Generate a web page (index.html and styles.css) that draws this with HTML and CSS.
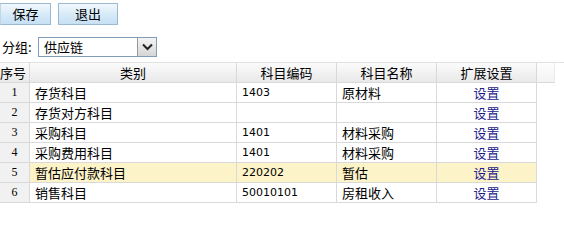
FILE: index.html
```html
<!DOCTYPE html>
<html lang="zh">
<head>
<meta charset="utf-8">
<title>科目设置</title>
<link rel="stylesheet" href="styles.css">
</head>
<body>
<div class="toolbar">
  <button class="btn btn-save">保存</button>
  <button class="btn btn-exit">退出</button>
</div>
<div class="group-row">
  <span class="group-label">分组:</span>
  <div class="select">
    <span class="select-value">供应链</span>
    <span class="select-arrow">
      <svg width="11" height="8" viewBox="0 0 11 8"><path d="M1 1.5 L5.5 6 L10 1.5" fill="none" stroke="#222" stroke-width="2"/></svg>
    </span>
  </div>
</div>
<div class="grid">
  <div class="row head">
    <div class="c c-no">序号</div>
    <div class="c c-type">类别</div>
    <div class="c c-code">科目编码</div>
    <div class="c c-name">科目名称</div>
    <div class="c c-ext">扩展设置</div>
    <div class="c c-fill"></div>
  </div>
  <div class="row">
    <div class="c c-no">1</div>
    <div class="c c-type">存货科目</div>
    <div class="c c-code">1403</div>
    <div class="c c-name">原材料</div>
    <div class="c c-ext"><a class="link">设置</a></div>
  </div>
  <div class="row">
    <div class="c c-no">2</div>
    <div class="c c-type">存货对方科目</div>
    <div class="c c-code"></div>
    <div class="c c-name"></div>
    <div class="c c-ext"><a class="link">设置</a></div>
  </div>
  <div class="row">
    <div class="c c-no">3</div>
    <div class="c c-type">采购科目</div>
    <div class="c c-code">1401</div>
    <div class="c c-name">材料采购</div>
    <div class="c c-ext"><a class="link">设置</a></div>
  </div>
  <div class="row">
    <div class="c c-no">4</div>
    <div class="c c-type">采购费用科目</div>
    <div class="c c-code">1401</div>
    <div class="c c-name">材料采购</div>
    <div class="c c-ext"><a class="link">设置</a></div>
  </div>
  <div class="row selected">
    <div class="c c-no">5</div>
    <div class="c c-type">暂估应付款科目</div>
    <div class="c c-code">220202</div>
    <div class="c c-name">暂估</div>
    <div class="c c-ext"><a class="link">设置</a></div>
  </div>
  <div class="row">
    <div class="c c-no">6</div>
    <div class="c c-type">销售科目</div>
    <div class="c c-code">50010101</div>
    <div class="c c-name">房租收入</div>
    <div class="c c-ext"><a class="link">设置</a></div>
  </div>
</div>
</body>
</html>
```

FILE: styles.css
```css
html, body {
  margin: 0;
  padding: 0;
  background: #ffffff;
}
body {
  font-family: "Noto Sans CJK SC", "Liberation Sans", sans-serif;
  font-size: 12px;
  color: #000;
  width: 564px;
  height: 242px;
  overflow: hidden;
}
.toolbar {
  display: flex;
  gap: 7px;
  padding-top: 3px;
  height: 22px;
}
.btn {
  height: 22px;
  margin: 0;
  padding: 0;
  border: 1px solid #9ab9d3;
  background: linear-gradient(#f2f8fd, #d4e8f7 60%, #c6e0f4);
  font-family: inherit;
  font-size: 13px;
  color: #000;
  line-height: 20px;
}
.btn-save { width: 51px; border-left-color: #c0d6e8; }
.btn-exit { width: 60px; }
.group-row {
  display: flex;
  align-items: center;
  margin-top: 12px;
  height: 20px;
}
.group-label {
  width: 36px;
  padding-left: 2px;
  line-height: 20px;
  font-size: 13px;
}
.select {
  display: flex;
  width: 119px;
  height: 20px;
  box-sizing: border-box;
  border: 1px solid #7f9db9;
  background: #fff;
}
.select-value {
  flex: 1;
  padding-left: 5px;
  line-height: 18px;
  font-size: 13px;
}
.select-arrow {
  width: 19px;
  height: 18px;
  display: flex;
  align-items: center;
  justify-content: center;
  background: linear-gradient(#f4f4f4, #d6d6d6);
  border-left: 1px solid #9a9a9a;
  box-sizing: border-box;
}
.grid {
  margin-top: 5px;
  border-top: 1px solid #e2e2e2;
}
.row {
  display: flex;
  height: 20px;
}
.c {
  box-sizing: border-box;
  height: 20px;
  line-height: 19px;
  border-right: 1px solid #d9d9d9;
  border-bottom: 1px solid #d9d9d9;
  padding-left: 5px;
  white-space: nowrap;
  overflow: hidden;
}
.c-no {
  width: 30px;
  padding-left: 0;
  text-align: center;
  background: #f1f1f1;
  font-family: "Liberation Serif", serif;
  font-size: 12px;
}
.c-type { width: 207px; font-size: 13px; }
.c-code { width: 100px; font-family: "DejaVu Sans", sans-serif; font-size: 11px; }
.c-name { width: 100px; font-size: 13px; }
.c-ext { width: 100px; text-align: center; padding-left: 0; font-size: 13px; }
.head .c {
  background: linear-gradient(#fbfbfb, #e9e9e9);
  text-align: center;
  padding-left: 0;
  font-family: "Noto Sans CJK SC", sans-serif;
  font-size: 13px;
}
.head .c-no { text-align: left; padding-left: 0; }
.head .c-fill {
  width: 18px;
  background: linear-gradient(#fdfdfd, #f3f3f3);
  border-right: 1px solid #ececec;
}
.selected .c-type,
.selected .c-code,
.selected .c-name,
.selected .c-ext {
  background: #fdf3c8;
}
.link {
  color: #1c1c8c;
  text-decoration: none;
}
```
